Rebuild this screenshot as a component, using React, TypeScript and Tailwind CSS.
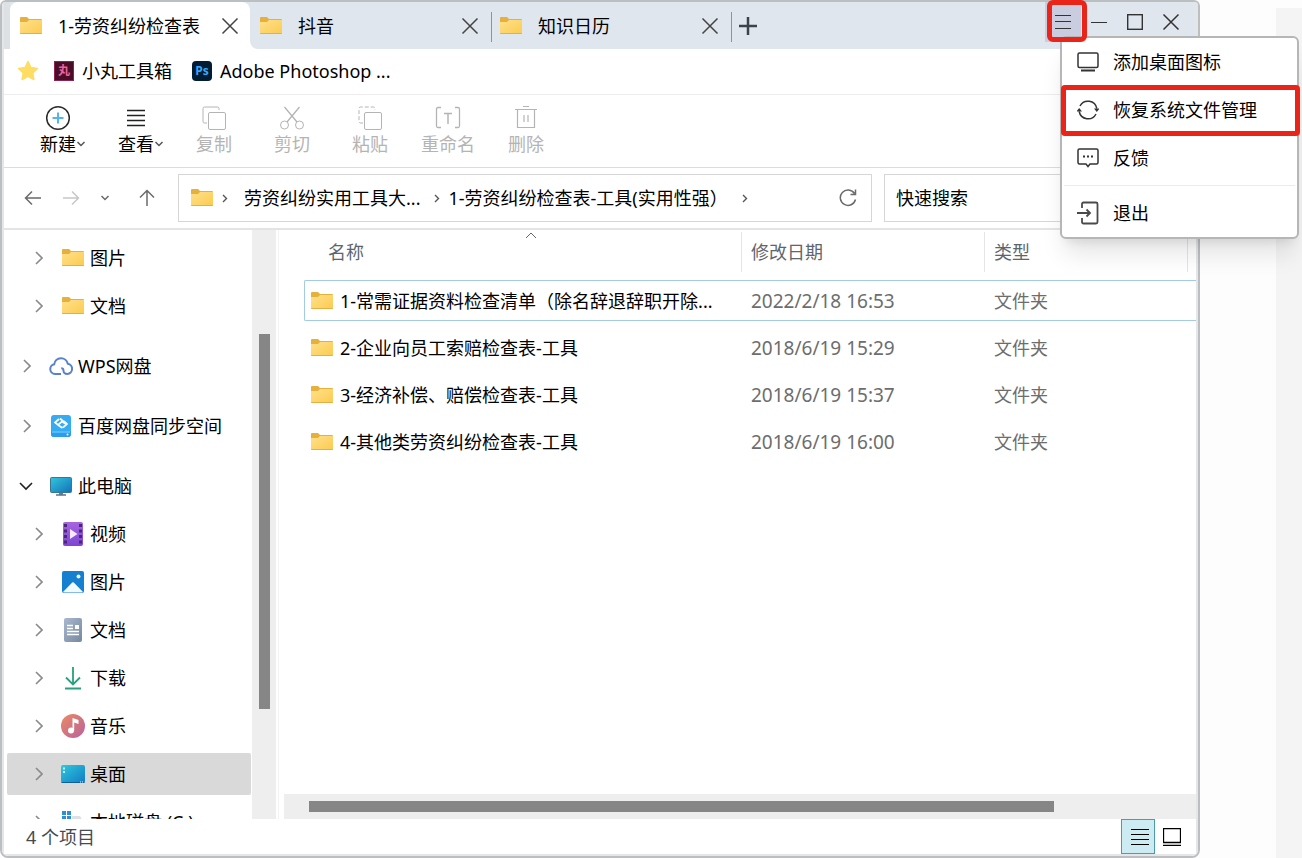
import { useState } from "react";
import type { ReactNode } from "react";
import clsx from "clsx";

const TABS = [
  { id: 1, title: "1-劳资纠纷检查表" },
  { id: 2, title: "抖音" },
  { id: 3, title: "知识日历" },
];

const FILES = [
  { id: 1, name: "1-常需证据资料检查清单（除名辞退辞职开除...", date: "2022/2/18 16:53", type: "文件夹" },
  { id: 2, name: "2-企业向员工索赔检查表-工具",                 date: "2018/6/19 15:29", type: "文件夹" },
  { id: 3, name: "3-经济补偿、赔偿检查表-工具",                 date: "2018/6/19 15:37", type: "文件夹" },
  { id: 4, name: "4-其他类劳资纠纷检查表-工具",                 date: "2018/6/19 16:00", type: "文件夹" },
];

const Svg = ({ w, h, className, children }: { w: number; h: number; className?: string; children: ReactNode }) => (
  <svg width={w} height={h} viewBox={`0 0 ${w} ${h}`} fill="none" stroke="currentColor" className={clsx("shrink-0", className)} aria-hidden="true">
    {children}
  </svg>
);

const Folder = () => (
  <Svg w={24} h={20}>
    <defs>
      <linearGradient id="folder" x1="0" y1="0" x2="1" y2="1">
        <stop offset="0" stopColor="#ffe08a" />
        <stop offset="1" stopColor="#fbcb50" />
      </linearGradient>
    </defs>
    <g stroke="none">
      <path d="M1 2a1 1 0 0 1 1-1h6l2 2h12a1 1 0 0 1 1 1v2H1z" fill="#e5b13a" />
      <path d="M1 6h7l2-2h13v13a1 1 0 0 1-1 1H2a1 1 0 0 1-1-1z" fill="url(#folder)" />
      <path d="M1 17h22a1 1 0 0 1-1 1H2a1 1 0 0 1-1-1z" fill="#e3b045" />
    </g>
  </Svg>
);

const Close = ({ className }: { className?: string }) => (
  <Svg w={18} h={18} className={className}><path d="M1.500 1.500l15 15M16.500 1.500l-15 15" strokeWidth="1.500" /></Svg>
);

const Chevron = ({ className }: { className?: string }) => (
  <Svg w={8} h={14} className={className}><path d="M1 1l6 6-6 6" strokeWidth="1.600" /></Svg>
);

const SmallDown = ({ className }: { className?: string }) => (
  <Svg w={10} h={6} className={className}><path d="M1.500 1L5 4.500 8.500 1" strokeWidth="1.500" /></Svg>
);

const Crumb = () => (
  <Svg w={6} h={9} className="text-[#555]"><path d="M1 1l3.500 3.500L1 8" strokeWidth="1.400" /></Svg>
);

/* sidebar icons */
const Cloud = () => (
  <Svg w={24} h={20} className="text-[#5b82c9]">
    <path d="M12 18H6a4.900 4.900 0 0 1-.8-9.700A6.900 6.900 0 0 1 18.800 7.700 5.200 5.200 0 0 1 18.300 18c-2.500 0-3.800-1.500-3.800-3.300 0-1.400-.8-2.400-2.300-2.400" strokeWidth="2" />
  </Svg>
);

const Baidu = () => (
  <Svg w={24} h={24}>
    <g stroke="none">
      <rect x="2" y="1" width="20" height="22" rx="3" fill="#35abf2" />
      <path d="M2 17h20v3a3 3 0 0 1-3 3H5a3 3 0 0 1-3-3z" fill="#2a9df0" />
      <path d="M3 18h18" stroke="#8ad6fb" />
      <circle cx="18.500" cy="20.500" r="1" fill="#e6f7ff" />
    </g>
    <path d="M10 5L6 8.500l3 2.500 4-3.500 4.500 3M14 13.500l4-3.500-3-3M11 4.500l4 3.500M9 11l4.500 3" stroke="#fff" strokeWidth="1.700" />
  </Svg>
);

const Computer = () => (
  <Svg w={24} h={20}>
    <defs>
      <linearGradient id="screen" x1="0" y1="0" x2="1" y2="1">
        <stop offset="0" stopColor="#32c6dc" />
        <stop offset="1" stopColor="#1272b8" />
      </linearGradient>
    </defs>
    <rect x="1.500" y="1.500" width="21" height="15" rx="1" fill="url(#screen)" stroke="#3c7791" />
    <path d="M10 17h4v2h-4z" fill="#6d7f8d" stroke="none" />
    <path d="M7 19h10" stroke="#56748a" strokeWidth="1.500" />
  </Svg>
);

const Video = () => (
  <Svg w={24} h={24}>
    <defs>
      <linearGradient id="video" x1="0" y1="0" x2="0" y2="1">
        <stop offset="0" stopColor="#a765e0" />
        <stop offset="1" stopColor="#7d45d4" />
      </linearGradient>
    </defs>
    <rect x="2" y="0" width="20" height="24" rx="2" fill="url(#video)" stroke="none" />
    <path d="M4.500 2v20M19.500 2v20" stroke="#482779" strokeWidth="3" strokeDasharray="3 2.500" />
    <path d="M9 7l7.500 5L9 17z" fill="#f6e9ff" stroke="none" />
  </Svg>
);

const Picture = () => (
  <Svg w={24} h={24}>
    <g stroke="none">
      <rect x="1" y="1" width="22" height="22" rx="2" fill="#1480cf" />
      <path d="M2 22L10.500 13.200a2 2 0 0 1 3 0L22 22a2 2 0 0 1-1 .5H3a2 2 0 0 1-1-.5z" fill="#f2f9ff" />
      <circle cx="17.500" cy="6.500" r="2" fill="#e3f4ff" />
    </g>
  </Svg>
);

const Doc = () => (
  <Svg w={24} h={24}>
    <defs>
      <linearGradient id="doc" x1="0" y1="0" x2="1" y2="1">
        <stop offset="0" stopColor="#a9b8ce" />
        <stop offset="1" stopColor="#76889f" />
      </linearGradient>
    </defs>
    <rect x="3" y="0" width="18" height="24" rx="2" fill="url(#doc)" stroke="none" />
    <path d="M6 7.500h6M6 10.500h6M6 13.500h12M6 16.500h12" stroke="#fff" strokeWidth="1.300" />
    <rect x="14" y="7" width="4" height="4" fill="#fff" stroke="none" />
  </Svg>
);

const Download = () => (
  <Svg w={24} h={24} className="text-[#27a17c]">
    <path d="M12 1v17M5 11.500l7 7 7-7M4 22.500h16" strokeWidth="1.800" />
  </Svg>
);

const Music = () => (
  <Svg w={24} h={24}>
    <defs>
      <linearGradient id="music" x1="0" y1="0" x2="1" y2="1">
        <stop offset="0" stopColor="#ec8a62" />
        <stop offset="1" stopColor="#b8629d" />
      </linearGradient>
    </defs>
    <g stroke="none">
      <circle cx="12" cy="12" r="12" fill="url(#music)" />
      <circle cx="10" cy="16.500" r="3" fill="#fff" />
      <path d="M11.500 4l6 2v4l-4.300-1.500v8h-1.700z" fill="#fff" />
    </g>
  </Svg>
);

const Desktop = () => (
  <Svg w={24} h={20}>
    <defs>
      <linearGradient id="desk" x1="0" y1="0" x2="1" y2="1">
        <stop offset="0" stopColor="#30c8dc" />
        <stop offset="1" stopColor="#117cc4" />
      </linearGradient>
    </defs>
    <rect x="0" y="1" width="24" height="18" rx="2" fill="url(#desk)" stroke="none" />
    <path d="M0 18h24a2 2 0 0 1-2 1H2a2 2 0 0 1-2-1z" fill="#0f5f9b" stroke="none" />
    <path d="M3 3.500v7" stroke="#b9f3fa" strokeWidth="2" strokeDasharray="2 1.500" />
    <path d="M19 18h4" stroke="#e6f7ff" strokeDasharray="1 1" />
  </Svg>
);

const Disk = () => (
  <Svg w={24} h={24}>
    <path d="M1 1h4v4H1zM6 1h4v4H6zM1 6h4v4H1zM6 6h4v4H6z" fill="#2f8fd6" stroke="none" />
    <path d="M11 6h8l3 5v9H1v-9h10z" fill="#dde1e6" stroke="none" />
  </Svg>
);

const TREE = [
  { id: "pic-q",  label: "图片",             icon: <Folder />,   level: 1, gap: false },
  { id: "doc-q",  label: "文档",             icon: <Folder />,   level: 1, gap: false },
  { id: "wps",    label: "WPS网盘",          icon: <Cloud />,    level: 0, gap: true },
  { id: "baidu",  label: "百度网盘同步空间", icon: <Baidu />,    level: 0, gap: true },
  { id: "pc",     label: "此电脑",           icon: <Computer />, level: 0, gap: true },
  { id: "video",  label: "视频",             icon: <Video />,    level: 1, gap: false },
  { id: "pic",    label: "图片",             icon: <Picture />,  level: 1, gap: false },
  { id: "doc",    label: "文档",             icon: <Doc />,      level: 1, gap: false },
  { id: "down",   label: "下载",             icon: <Download />, level: 1, gap: false },
  { id: "music",  label: "音乐",             icon: <Music />,    level: 1, gap: false },
  { id: "desk",   label: "桌面",             icon: <Desktop />,  level: 1, gap: false },
  { id: "disk-c", label: "本地磁盘 (C:)",    icon: <Disk />,     level: 1, gap: false },
];

const TOOLS = [
  {
    label: "新建", menu: true,
    icon: (
      <Svg w={26} h={26}>
        <circle cx="13" cy="13" r="11.300" stroke="#2b2b2b" strokeWidth="1.500" />
        <path d="M13 7.500v11M7.500 13h11" stroke="#55b4ec" strokeWidth="2" />
      </Svg>
    ),
  },
  {
    label: "查看", menu: true,
    icon: <Svg w={26} h={26}><path d="M4 5.500h18M4 10.500h18M4 15.500h18M4 20.500h18" stroke="#222" strokeWidth="1.500" /></Svg>,
  },
  {
    label: "复制", menu: false,
    icon: (
      <Svg w={26} h={26}>
        <path d="M6 18H3.500A1.500 1.500 0 0 1 2 16.500v-13A1.500 1.500 0 0 1 3.500 2h13A1.500 1.500 0 0 1 18 3.500V5" />
        <rect x="7.500" y="7.500" width="17" height="17" rx="1.500" />
      </Svg>
    ),
  },
  {
    label: "剪切", menu: false,
    icon: (
      <Svg w={26} h={26}>
        <circle cx="5.500" cy="20" r="4" />
        <circle cx="20.500" cy="20" r="4" />
        <path d="M5.500 2l12.500 15M20.500 2L8 17" strokeWidth="1.300" />
      </Svg>
    ),
  },
  {
    label: "粘贴", menu: false,
    icon: (
      <Svg w={26} h={26}>
        <path d="M6 18H3.500A1.500 1.500 0 0 1 2 16.500v-13A1.500 1.500 0 0 1 3.500 2h13A1.500 1.500 0 0 1 18 3.500V5" strokeDasharray="4 2" />
        <rect x="7.500" y="7.500" width="17" height="17" rx="1.500" />
      </Svg>
    ),
  },
  {
    label: "重命名", menu: false,
    icon: (
      <Svg w={26} h={26}>
        <path d="M6 2.500H3a1.500 1.500 0 0 0-1.500 1.500v17A1.500 1.500 0 0 0 3 22.500h3M20 2.500h3a1.500 1.500 0 0 1 1.500 1.500v17a1.500 1.500 0 0 1-1.500 1.500h-3" strokeWidth="1.300" />
        <path d="M9 8.500h8M13 8.500V19" strokeWidth="1.500" />
      </Svg>
    ),
  },
  {
    label: "删除", menu: false,
    icon: (
      <Svg w={26} h={26}>
        <path d="M2 4.500h22M10 1.500h6M4.500 4.500v18h17v-18M11 10v7M15 10v7" strokeWidth="1.200" />
      </Svg>
    ),
  },
];

const TitleBar = () => {
  const [active, setActive] = useState(1);
  return (
    <div className="flex h-[47px] items-start justify-between bg-[#dfe6ee]">
      <div className="flex h-full">
        <div className="flex w-1.5 items-end bg-[#dde1e4]" />
        {TABS.map((tab) => (
          <div
            key={tab.id}
            className={clsx("relative flex h-full w-60 items-center pl-[9px] pr-2", tab.id === active && "rounded-t-lg bg-white")}
          >
            <button onClick={() => setActive(tab.id)} className="flex flex-1 items-center gap-[15px] text-left">
              <Folder />
              <span>{tab.title}</span>
            </button>
            <button aria-label="关闭标签页" className="flex h-6 w-6 items-center justify-center text-[#444]"><Close /></button>
            {tab.id !== active && <span className="absolute -right-0.5 top-2.5 h-[30px] w-px bg-[#8d949b]" />}
            {tab.id === active && (
              <svg width="8" height="8" viewBox="0 0 8 8" className="absolute -right-2 bottom-0" aria-hidden="true"><path d="M0 0a8 8 0 0 0 8 8H0z" fill="#fff" /></svg>
            )}
          </div>
        ))}
        <button aria-label="新建标签页" className="flex w-9 items-center justify-center text-[#3c4247]">
          <Svg w={18} h={18}><path d="M9 0v18M0 9h18" strokeWidth="2.500" /></Svg>
        </button>
      </div>
      <div className="flex pr-[7px] text-[#333]">
        <button aria-label="菜单" className="flex h-10 w-9 items-center justify-center bg-[#cacde0]">
          <Svg w={16} h={14}><path d="M0 .5h16M0 6.500h16M0 13.500h16" /></Svg>
        </button>
        <button aria-label="最小化" className="flex h-10 w-9 items-center justify-center">
          <Svg w={16} h={3}><path d="M0 1.500h16" /></Svg>
        </button>
        <button aria-label="最大化" className="flex h-10 w-9 items-center justify-center">
          <Svg w={16} h={16}><rect x=".7" y=".7" width="14.600" height="14.600" strokeWidth="1.400" /></Svg>
        </button>
        <button aria-label="关闭" className="flex h-10 w-9 items-center justify-center"><Close /></button>
      </div>
    </div>
  );
};

const Bookmarks = () => (
  <div className="flex h-[46px] items-center border-b border-[#ededed] pb-0.5 pl-3">
    <Svg w={24} h={24}>
      <path d="M12 2.500l2.900 6 6.600.9-4.800 4.600 1.200 6.500-5.900-3.200-5.900 3.200 1.200-6.500L2.500 9.400l6.600-.9z" fill="#ffdd62" stroke="#ffdd62" strokeWidth="1.500" strokeLinejoin="round" />
    </Svg>
    <a href="#tools" className="ml-3.5 flex items-center gap-2">
      <span className="flex h-5 w-5 items-center justify-center border border-[#8f2250] bg-[#4a0d28] text-xs font-bold text-[#f0609c]">丸</span>
      小丸工具箱
    </a>
    <a href="#ps" className="ml-5 flex items-center gap-2">
      <span className="flex h-5 w-5 items-center justify-center rounded bg-[#001d34] font-['Open_Sans',sans-serif] text-xs font-bold text-[#35a8ff]">Ps</span>
      Adobe Photoshop ...
    </a>
  </div>
);

const Toolbar = () => (
  <div className="flex h-[73px] border-b border-[#dcdcdc] pl-[15px] pt-2.5">
    {TOOLS.map((tool) => (
      <button key={tool.label} disabled={!tool.menu} className={clsx("flex w-[78px] flex-col items-center", tool.menu ? "text-black" : "text-[#b4b4b4]")}>
        {tool.icon}
        <span className="flex items-center leading-[26px]">
          {tool.label}
          {tool.menu && <SmallDown className="-mr-2.5 text-[#555]" />}
        </span>
      </button>
    ))}
  </div>
);

const AddressRow = () => (
  <div className="flex h-[62px] items-center border-b-2 border-[#e4e4e4] pl-5 pr-2 text-[#6a6a6a]">
    <button aria-label="后退" className="flex w-5 shrink-0"><Svg w={18} h={16}><path d="M17 8H1.500M8 1.500L1.500 8 8 14.500" strokeWidth="1.500" /></Svg></button>
    <button aria-label="前进" className="ml-[18px] flex w-5 shrink-0 text-[#c6c6c6]"><Svg w={18} h={16}><path d="M1 8h15.500M10 1.500L16.500 8 10 14.500" strokeWidth="1.500" /></Svg></button>
    <button aria-label="最近位置" className="ml-[18px] flex w-5 shrink-0"><SmallDown /></button>
    <button aria-label="上移" className="ml-[18px] flex w-5 shrink-0"><Svg w={18} h={18}><path d="M9 17V1.500M2 8.500l7-7 7 7" strokeWidth="1.500" /></Svg></button>
    <div className="ml-5 flex h-12 flex-1 items-center border border-[#d6d6d6] pl-[11px] pr-3.5 text-black">
      <Folder />
      <span className="ml-2"><Crumb /></span>
      <a href="#parent" className="ml-4">劳资纠纷实用工具大...</a>
      <span className="ml-3.5"><Crumb /></span>
      <a href="#current" className="ml-2">1-劳资纠纷检查表-工具(实用性强）</a>
      <span className="ml-3.5"><Crumb /></span>
      <button aria-label="刷新" className="ml-auto flex text-[#6a6a6a]">
        <Svg w={18} h={18}><path d="M16.500 10.500A7.700 7.700 0 1 1 15.500 4.500M16.500 .5v5h-5" strokeWidth="1.500" /></Svg>
      </button>
    </div>
    <input aria-label="快速搜索" placeholder="快速搜索" className="ml-3 h-12 w-[304px] border border-[#d6d6d6] px-[11px] outline-none placeholder:text-black" />
  </div>
);

const Sidebar = () => {
  const [selected, setSelected] = useState("desk");
  return (
    <aside className="flex w-[272px] shrink-0 overflow-hidden">
      <nav className="min-w-0 flex-1 overflow-hidden pl-[3px] pr-px">
        {TREE.map((node) => (
          <button
            key={node.id}
            onClick={() => setSelected(node.id)}
            className={clsx(
              "my-1.5 flex h-[42px] w-full items-center rounded-xs text-left first:mt-[7px]",
              node.level === 1 ? "pl-7" : "pl-4",
              node.gap && "mt-[18px]",
              selected === node.id && "bg-[#d9d9d9]"
            )}
          >
            <span className="flex w-[26px] shrink-0">
              {node.id === "pc" ? (
                <Svg w={14} h={9} className="-ml-1 text-[#222]"><path d="M1 1l6 6 6-6" strokeWidth="1.600" /></Svg>
              ) : (
                <Chevron className="text-[#8a8a8a]" />
              )}
            </span>
            {node.icon}
            <span className="ml-[5px] whitespace-nowrap">{node.label}</span>
          </button>
        ))}
      </nav>
      <div className="flex w-6 flex-col items-center bg-[#eeeeee]">
        <div className="mt-[104px] h-[375px] w-[11px] bg-[#868686]" />
      </div>
    </aside>
  );
};

const FileList = () => (
  <main className="flex min-w-0 flex-1 flex-col">
    <div className="relative min-h-0 flex-1 overflow-hidden pl-5">
      <Svg w={12} h={7} className="absolute left-[241px] top-0.5 text-[#666]"><path d="M1 6l5-5 5 5" /></Svg>
      <table className="w-full table-fixed border-collapse text-left">
        <thead>
          <tr className="h-[47px] align-top text-[#5e666d]">
            <th className="w-[438px] p-0 pt-0.5 font-normal"><div className="flex h-10 items-center border-r border-[#e5e5e5] pl-6">名称</div></th>
            <th className="w-[243px] p-0 pt-0.5 font-normal"><div className="flex h-10 items-center border-r border-[#e5e5e5] pl-[9px]">修改日期</div></th>
            <th className="p-0 pt-0.5 pr-2 font-normal"><div className="flex h-10 items-center border-r border-[#e5e5e5] pl-[9px]">类型</div></th>
          </tr>
        </thead>
        <tbody>
          {FILES.map((file, i) => {
            const line = i === 0 ? "border-[#a3cbe3]" : "border-transparent";
            return (
              <tr key={file.id} className="h-[47px] text-[#6d6d6d]">
                <td className="p-0">
                  <div className={clsx("flex h-[41px] items-center gap-1.5 rounded-l-xs border-y border-l pl-[5px] text-black whitespace-nowrap", line)}>
                    <Folder />
                    {file.name}
                  </div>
                </td>
                <td className="p-0"><div className={clsx("flex h-[41px] items-center border-y pl-[9px] text-[19px]", line)}>{file.date}</div></td>
                <td className="p-0"><div className={clsx("flex h-[41px] items-center border-y pl-[9px]", line)}>{file.type}</div></td>
              </tr>
            );
          })}
        </tbody>
      </table>
    </div>
    <div className="flex h-[25px] items-center bg-[#eeeeee] pl-[25px] pr-[142px]">
      <div className="h-[11px] w-full bg-[#868686]" />
    </div>
  </main>
);

const StatusBar = () => (
  <footer className="flex h-[35px] items-center justify-between pl-[22px] pr-[7px] text-[#454b52]">
    <span>4 个项目</span>
    <div className="flex items-center text-black">
      <button aria-label="详细信息" className="flex h-[35px] w-[34px] items-center justify-center border border-[#4b9dab] bg-[#cdebf3] pl-1">
        <Svg w={18} h={18}><path d="M0 1.500h18M0 6.500h18M0 11.500h18M0 16.500h18" /></Svg>
      </button>
      <button aria-label="缩略图" className="flex h-[35px] w-[34px] items-center justify-center">
        <Svg w={18} h={18}><path d="M.5 .5h17v14H.5zM0 17.500h18" strokeWidth="1.300" /></Svg>
      </button>
    </div>
  </footer>
);

const MENU = [
  {
    label: "添加桌面图标",
    icon: <Svg w={22} h={20}><rect x="1" y="1" width="20" height="14.500" rx="1.500" strokeWidth="1.500" /><path d="M4 18.500h14" strokeWidth="2" /></Svg>,
  },
  {
    label: "恢复系统文件管理",
    icon: (
      <Svg w={22} h={22}>
        <path d="M3 7a9 9 0 0 1 16.800 2.500M19 15A9 9 0 0 1 2.200 12.500" strokeWidth="1.500" />
        <path d="M17 9.500h5.500L19.800 13zM-.5 12.500L2.200 9 5 12.500z" fill="currentColor" stroke="none" />
      </Svg>
    ),
  },
  {
    label: "反馈",
    icon: (
      <Svg w={22} h={20}>
        <path d="M2.500 1h17A1.500 1.500 0 0 1 21 2.500v12a1.500 1.500 0 0 1-1.500 1.500H13l-2 2.500L9 16H2.500A1.500 1.500 0 0 1 1 14.500v-12A1.500 1.500 0 0 1 2.500 1z" strokeWidth="1.500" />
        <path d="M6 8.500h2M10 8.500h2M14 8.500h2" strokeWidth="2" />
      </Svg>
    ),
  },
];

const AppMenu = () => (
  <div className="absolute right-[3px] top-9 w-[239px] rounded-md border-2 border-[#b6b6b6] bg-white shadow-xl">
    {MENU.map((item, i) => (
      <button key={item.label} className="relative flex h-12 w-full items-center gap-3.5 pl-[15px] text-left">
        <span className="text-[#333]">{item.icon}</span>
        {item.label}
        {i === 1 && <span className="absolute -right-[3px] -left-px -top-px h-[51px] rounded-sm border-[5px] border-[#ea2418]" />}
      </button>
    ))}
    <div className="mx-0.5 my-[3px] h-px bg-[#ececec]" />
    <button className="flex h-12 w-full items-center gap-3.5 pl-[15px] text-left">
      <Svg w={22} h={24} className="text-[#4a4a4a]">
        <path d="M5 7V3a1.500 1.500 0 0 1 1.500-1.500h12.500A1.500 1.500 0 0 1 20.500 3v18a1.500 1.500 0 0 1-1.500 1.500H6.500A1.500 1.500 0 0 1 5 21v-4M0 12h12.500M9.500 8.500L13 12l-3.500 3.500" strokeWidth="1.800" />
      </Svg>
      退出
    </button>
  </div>
);

export default function App() {
  return (
    <div className="relative flex h-screen bg-[#fdfdfd] font-['Noto_Sans','Noto_Sans_CJK_SC',sans-serif] text-[18px] leading-6 text-black">
      <div className="flex min-w-0 flex-1 flex-col overflow-hidden rounded-t-md rounded-b-lg border-2 border-[#bcbfc1] bg-white">
        <div className="flex min-h-0 flex-1 flex-col border-x-2 border-b-2 border-[#e4e6e8]">
          <TitleBar />
          <Bookmarks />
          <Toolbar />
          <AddressRow />
          <div className="flex min-h-0 flex-1">
            <Sidebar />
            <div className="mr-[5px] w-[3px] shrink-0 border-r border-[#f3f3f3]" />
            <FileList />
          </div>
          <StatusBar />
        </div>
      </div>
      <div className="w-[102px] shrink-0 pt-2 pl-[76px]">
        <div className="h-full bg-[#f4f4f4]" />
      </div>
      <AppMenu />
      <div className="pointer-events-none absolute right-[215px] top-0 h-[42px] w-10 rounded-md border-[5px] border-[#ea2418]" />
    </div>
  );
}
